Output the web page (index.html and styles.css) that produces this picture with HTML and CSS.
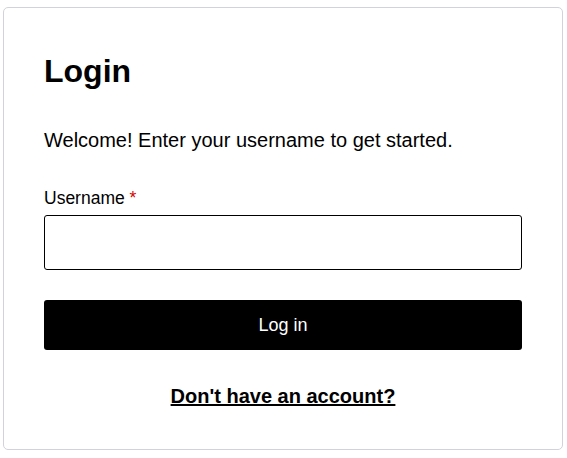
FILE: index.html
```html
<!DOCTYPE html>
<html lang="en">
<head>
<meta charset="utf-8">
<title>Login</title>
<link rel="stylesheet" href="styles.css">
</head>
<body>
<div class="card">
  <h1 class="title">Login</h1>
  <p class="intro">Welcome! Enter your username to get started.</p>
  <form class="form">
    <label class="label" for="username">Username <span class="req">*</span></label>
    <input class="input" id="username" type="text">
    <button class="btn" type="button">Log in</button>
  </form>
  <div class="footer"><a class="link" href="#">Don't have an account?</a></div>
</div>
</body>
</html>
```
FILE: styles.css
```css
html, body {
  margin: 0;
  background: #fff;
}
body {
  padding: 7px 4px 0 3px;
  font-family: "Liberation Sans", Arial, sans-serif;
  color: #000;
}
.card {
  box-sizing: border-box;
  height: 443px;
  border: 1px solid #d2d2da;
  border-radius: 5px;
  padding: 45px 40px 40px;
}
.title {
  margin: 0;
  font-size: 32px;
  line-height: 36px;
  font-weight: bold;
}
.intro {
  margin: 39px 0 0;
  font-size: 20px;
  line-height: 24px;
}
.form {
  display: flex;
  flex-direction: column;
  margin-top: 35px;
}
.label {
  font-size: 17.5px;
  line-height: 22px;
}
.req {
  color: #d40000;
}
.input {
  box-sizing: border-box;
  height: 55px;
  margin-top: 6px;
  border: 1px solid #000;
  border-radius: 3px;
  padding: 0 12px;
  font: inherit;
  font-size: 18px;
}
.btn {
  height: 50px;
  margin-top: 30px;
  border: 0;
  border-radius: 3px;
  background: #000;
  color: #fff;
  font-family: inherit;
  font-size: 18px;
}
.footer {
  margin-top: 34px;
  text-align: center;
  font-size: 20px;
  line-height: 24px;
}
.link {
  color: #000;
  font-weight: bold;
}
```
